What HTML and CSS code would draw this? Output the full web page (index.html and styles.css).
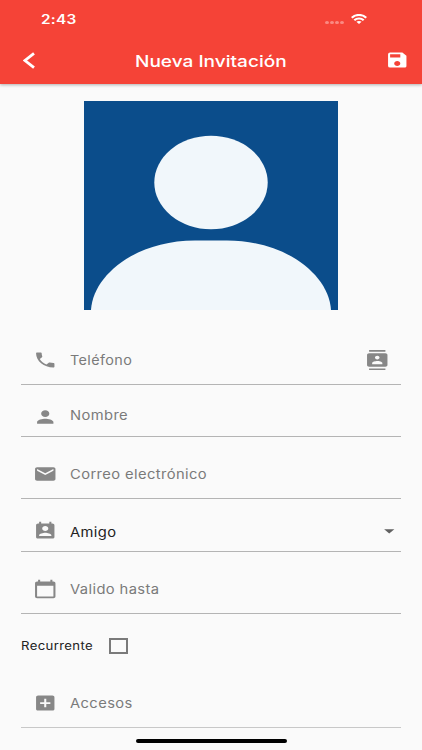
FILE: index.html
```html
<!DOCTYPE html>
<html lang="es">
<head>
<meta charset="utf-8">
<title>Nueva Invitación</title>
<link rel="stylesheet" href="styles.css">
</head>
<body>
<div class="screen">
  <header class="header">
    <div class="status">
      <span class="time wide">2:43</span>
      <div class="signals">
        <i class="dot"></i><i class="dot"></i><i class="dot"></i><i class="dot"></i>
        <svg class="wifi" viewBox="0 0 16 11" preserveAspectRatio="none"><g fill="none" stroke="#fff" stroke-width="2.300"><path d="M.7 4.100C4.800 0 11.200 0 15.300 4.100"/><path d="M3.300 6.900c2.700-2.600 6.700-2.600 9.400 0"/></g><path fill="#fff" d="M5.400 8.600c1.500-1.300 3.700-1.300 5.200 0L8 11z"/></svg>
      </div>
    </div>
    <div class="bar">
      <svg class="back" viewBox="0 0 12 17" preserveAspectRatio="none"><path d="M11 1.300 2 8.500l9 7.200" fill="none" stroke="#fff" stroke-width="2.800"/></svg>
      <h1 class="title"><span class="wide">Nueva Invitación</span></h1>
      <svg class="icon save" viewBox="0 0 24 24" preserveAspectRatio="none"><path d="M17 3H5a2 2 0 0 0-2 2v14a2 2 0 0 0 2 2h14c1.100 0 2-.9 2-2V7l-4-4zm-5 16c-1.660 0-3-1.340-3-3s1.340-3 3-3 3 1.340 3 3-1.340 3-3 3zm3-10H5V5h10v4z"/></svg>
    </div>
  </header>
  <svg class="avatar" viewBox="0 0 254 209" preserveAspectRatio="none"><path fill="#0b4d8b" d="M0 0h254v209H0z"/><ellipse cx="127" cy="81.500" rx="56.700" ry="46.700" fill="#f1f7fb"/><path fill="#f1f7fb" d="M7 209C9 174 52 139.500 111 139.500h32C202 139.500 245 174 247 209z"/></svg>
  <main class="form">
    <div class="row phone">
      <svg class="icon" viewBox="0 0 24 24" preserveAspectRatio="none"><path d="M6.620 10.790c1.440 2.830 3.760 5.140 6.590 6.590l2.200-2.200c.27-.27.67-.36 1.020-.24 1.120.37 2.330.57 3.570.57.55 0 1 .45 1 1V20c0 .55-.45 1-1 1-9.390 0-17-7.610-17-17 0-.55.45-1 1-1h3.500c.55 0 1 .45 1 1 0 1.250.2 2.450.57 3.570.11.35.03.74-.25 1.020l-2.200 2.200z"/></svg>
      <span class="label wide">Teléfono</span>
      <svg class="icon contacts" viewBox="0 0 24 24" preserveAspectRatio="none"><path d="M20 0H4v2h16V0zM4 24h16v-2H4v2zM20 4H4c-1.100 0-2 .9-2 2v12c0 1.100.9 2 2 2h16c1.100 0 2-.9 2-2V6c0-1.100-.9-2-2-2zm-8 2.750c1.240 0 2.250 1.010 2.250 2.250s-1.010 2.250-2.250 2.250S9.750 10.240 9.750 9 10.760 6.750 12 6.750zM17 17H7v-1.500c0-1.670 3.330-2.500 5-2.500s5 .83 5 2.500V17z"/></svg>
    </div>
    <div class="row name">
      <svg class="icon" viewBox="0 0 24 24" preserveAspectRatio="none"><path d="M12 12c2.210 0 4-1.790 4-4s-1.790-4-4-4-4 1.790-4 4 1.790 4 4 4zm0 2c-2.670 0-8 1.340-8 4v2h16v-2c0-2.660-5.330-4-8-4z"/></svg>
      <span class="label wide">Nombre</span>
    </div>
    <div class="row mail">
      <svg class="icon" viewBox="0 0 24 24" preserveAspectRatio="none"><path d="M20 4H4c-1.100 0-1.990.9-1.990 2L2 18c0 1.100.9 2 2 2h16c1.100 0 2-.9 2-2V6c0-1.100-.9-2-2-2zm0 4l-8 5-8-5V6l8 5 8-5v2z"/></svg>
      <span class="label wide">Correo electrónico</span>
    </div>
    <div class="row kind">
      <svg class="icon" viewBox="0 0 24 24" preserveAspectRatio="none"><path d="M19 3h-1V1h-2v2H8V1H6v2H5c-1.110 0-2 .9-2 2v14c0 1.100.89 2 2 2h14c1.100 0 2-.9 2-2V5c0-1.100-.9-2-2-2zm-7 3c1.660 0 3 1.340 3 3s-1.340 3-3 3-3-1.340-3-3 1.340-3 3-3zm6 12H6v-1c0-2 4-3.100 6-3.100s6 1.100 6 3.100v1z"/></svg>
      <span class="label wide">Amigo</span>
      <svg class="icon arrow" viewBox="0 0 24 24" preserveAspectRatio="none"><path d="M7 10l5 5 5-5z"/></svg>
    </div>
    <div class="row date">
      <svg class="icon" viewBox="0 0 24 24" preserveAspectRatio="none"><path d="M20 3h-1V1h-2v2H7V1H5v2H4c-1.100 0-2 .9-2 2v16c0 1.100.9 2 2 2h16c1.100 0 2-.9 2-2V5c0-1.100-.9-2-2-2zm0 18H4V8h16v13z"/></svg>
      <span class="label wide">Valido hasta</span>
    </div>
    <div class="check">
      <span class="check-label wide">Recurrente</span>
      <span class="box"></span>
    </div>
    <div class="row access">
      <svg class="icon" viewBox="0 0 24 24" preserveAspectRatio="none"><path d="M19 3H5c-1.110 0-2 .9-2 2v14c0 1.100.89 2 2 2h14c1.100 0 2-.9 2-2V5c0-1.100-.9-2-2-2zm-2 10h-4v4h-2v-4H7v-2h4V7h2v4h4v2z"/></svg>
      <span class="label wide">Accesos</span>
    </div>
  </main>
  <div class="home"></div>
</div>
</body>
</html>
```
FILE: styles.css
```css
* { box-sizing: border-box; }
body { margin: 0; background: #fafafa; font-family: Inter, "Liberation Sans", sans-serif; }
.screen { width: 422px; height: 750px; overflow: hidden; display: flex; flex-direction: column; background: #fafafa; }
.header { flex: none; height: 84px; background: #f54337; color: #fff; box-shadow: 0 1px 3px rgba(0,0,0,.3); }
.wide { display: inline-block; white-space: nowrap; transform: scaleX(1.142); transform-origin: left center; }
.status { height: 38px; display: flex; align-items: center; justify-content: space-between; padding: 0 55.500px 0 40.600px; }
.time { margin-top: 2px; font-size: 12.600px; font-weight: 600; line-height: 16px; letter-spacing: .2px; transform: scaleX(1.220); }
.signals { display: flex; align-items: center; gap: 1.400px; }
.dot { width: 3.800px; height: 3px; margin-top: 7px; border-radius: 50%; background: #fa8a82; }
.wifi { width: 16px; height: 10px; margin-left: 5px; }
.bar { height: 46px; display: flex; align-items: center; padding: 0 13px 1px 23px; }
.back { width: 12px; height: 17px; }
.title { flex: 1; margin: 1px 0 0 99.500px; font-size: 16.200px; font-weight: 500; line-height: 22px; }
.title .wide { transform: scaleX(1.177); }
.icon { flex: none; width: 24.500px; height: 20.100px; fill: #878787; }
.save { fill: #fff; }
.avatar { flex: none; width: 254px; height: 209px; margin: 16.500px 0 0 84px; }
.form { margin: 25.500px 21px 0; }
.row { display: flex; align-items: flex-end; border-bottom: 1px solid #b4b4b4; padding-left: 11.700px; }
.label { font-size: 12.900px; line-height: 18px; letter-spacing: .35px; color: #7a7a7a; margin-left: 12.400px; }
.contacts { margin: 0 12px 0 auto; }
.phone { height: 50px; padding-bottom: 14px; }
.phone .label { transform: scaleX(1.116); }
.name { height: 52px; padding-bottom: 8.700px; }
.name .label { margin-bottom: 2.800px; }
.mail { height: 62px; padding-bottom: 14px; }
.kind { height: 53px; padding-bottom: 9.500px; }
.kind .label { color: #222; }
.arrow { margin-left: auto; fill: #616161; }
.date { height: 62px; padding-bottom: 14px; }
.check { height: 64px; display: flex; align-items: center; }
.check-label { width: 88px; font-size: 11.300px; line-height: 16px; letter-spacing: .3px; color: #222; transform: scaleX(1.165); }
.box { width: 19px; height: 16px; border: 2px solid #7a7a7a; }
.access { height: 50px; padding-bottom: 14px; border-color: #c8c8c8; }
.home { flex: none; width: 151px; height: 4px; margin: 11px 0 0 135.500px; border-radius: 2px; background: #000; }
```
